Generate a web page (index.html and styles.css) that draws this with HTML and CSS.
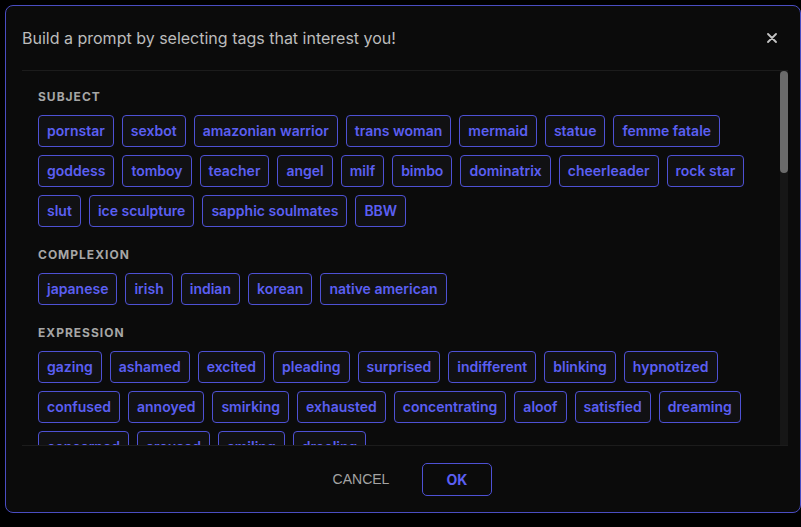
FILE: index.html
```html
<!DOCTYPE html>
<html>
    <head>
        <meta charset="UTF-8">
        <meta name="viewport" content="width=device-width, initial-scale=1.0">
        <title>Prompt Builder</title>
        <link rel="stylesheet" href="styles.css">
    </head>
    <body>
        <div class="dialog">
            <div class="dialog-header">
                <h2 class="dialog-title">Build a prompt by selecting tags that interest you!</h2>
                <button class="close-btn" aria-label="Close">
                    <svg width="10" height="10" viewBox="0 0 10 10">
                        <path d="M1 1 L9 9 M9 1 L1 9" stroke="#c4c4c4" stroke-width="1.8" stroke-linecap="round"/>
                    </svg>
                </button>
            </div>

            <div class="content-wrap">
                <div class="dialog-content">
                    <div class="section">
                        <h3 class="section-title">SUBJECT</h3>
                        <div class="tags">
                            <span class="tag">pornstar</span>
                            <span class="tag">sexbot</span>
                            <span class="tag">amazonian warrior</span>
                            <span class="tag">trans woman</span>
                            <span class="tag">mermaid</span>
                            <span class="tag">statue</span>
                            <span class="tag">femme fatale</span>
                            <span class="tag">goddess</span>
                            <span class="tag">tomboy</span>
                            <span class="tag">teacher</span>
                            <span class="tag">angel</span>
                            <span class="tag">milf</span>
                            <span class="tag">bimbo</span>
                            <span class="tag">dominatrix</span>
                            <span class="tag">cheerleader</span>
                            <span class="tag">rock star</span>
                            <span class="tag">slut</span>
                            <span class="tag">ice sculpture</span>
                            <span class="tag">sapphic soulmates</span>
                            <span class="tag">BBW</span>
                        </div>
                    </div>

                    <div class="section">
                        <h3 class="section-title">COMPLEXION</h3>
                        <div class="tags">
                            <span class="tag">japanese</span>
                            <span class="tag">irish</span>
                            <span class="tag">indian</span>
                            <span class="tag">korean</span>
                            <span class="tag">native american</span>
                        </div>
                    </div>

                    <div class="section">
                        <h3 class="section-title">EXPRESSION</h3>
                        <div class="tags">
                            <span class="tag">gazing</span>
                            <span class="tag">ashamed</span>
                            <span class="tag">excited</span>
                            <span class="tag">pleading</span>
                            <span class="tag">surprised</span>
                            <span class="tag">indifferent</span>
                            <span class="tag">blinking</span>
                            <span class="tag">hypnotized</span>
                            <span class="tag">confused</span>
                            <span class="tag">annoyed</span>
                            <span class="tag">smirking</span>
                            <span class="tag">exhausted</span>
                            <span class="tag">concentrating</span>
                            <span class="tag">aloof</span>
                            <span class="tag">satisfied</span>
                            <span class="tag">dreaming</span>
                            <span class="tag">concerned</span>
                            <span class="tag">aroused</span>
                            <span class="tag">smiling</span>
                            <span class="tag">drooling</span>
                        </div>
                    </div>

                    <div class="section">
                        <h3 class="section-title">HAIR</h3>
                        <div class="tags">
                            <span class="tag">blonde</span>
                            <span class="tag">brunette</span>
                            <span class="tag">redhead</span>
                            <span class="tag">black hair</span>
                            <span class="tag">pink hair</span>
                            <span class="tag">ponytail</span>
                            <span class="tag">pigtails</span>
                            <span class="tag">braids</span>
                            <span class="tag">bob cut</span>
                            <span class="tag">long hair</span>
                            <span class="tag">short hair</span>
                            <span class="tag">curly hair</span>
                        </div>
                    </div>

                    <div class="section">
                        <h3 class="section-title">STYLE</h3>
                        <div class="tags">
                            <span class="tag">photorealistic</span>
                            <span class="tag">anime</span>
                            <span class="tag">oil painting</span>
                            <span class="tag">watercolor</span>
                            <span class="tag">digital art</span>
                            <span class="tag">cyberpunk</span>
                            <span class="tag">fantasy</span>
                            <span class="tag">vintage</span>
                            <span class="tag">cinematic</span>
                        </div>
                    </div>
                </div>

                <div class="scrollbar">
                    <div class="scroll-thumb"></div>
                </div>
            </div>

            <div class="dialog-footer">
                <button class="btn-cancel">CANCEL</button>
                <button class="btn-ok">OK</button>
            </div>
        </div>
    </body>
</html>
```

FILE: styles.css
```css
*{
    margin: 0;
    padding: 0;
    box-sizing: border-box;
}
body{
    background-color: #000;
    font-family: Inter, "Noto Sans", sans-serif;
    overflow: hidden;
}
.dialog{
    margin: 5px 0 0 5px;
    width: 796px;
    height: 508px;
    background-color: #0b0b0b;
    border: 1px solid #4a4dc2;
    border-radius: 8px;
    display: flex;
    flex-direction: column;
}
.dialog-header{
    height: 64px;
    flex-shrink: 0;
    display: flex;
    align-items: center;
    justify-content: space-between;
    padding: 0 23px 0 16px;
}
.dialog-title{
    font-size: 16px;
    font-weight: 400;
    color: #bcbcbc;
}
.close-btn{
    background: none;
    border: none;
    display: flex;
    cursor: pointer;
}
.content-wrap{
    flex: 1;
    min-height: 0;
    display: flex;
    margin: 0 12px 0 16px;
    border-top: 1px solid #1c1c1c;
    border-bottom: 1px solid #1c1c1c;
}
.dialog-content{
    flex: 1;
    overflow: hidden;
    padding: 17px 16px 0 16px;
}
.scrollbar{
    width: 8px;
    flex-shrink: 0;
    background-color: #161616;
}
.scroll-thumb{
    height: 102px;
    background-color: #6b6b6b;
    border-radius: 4px;
}
.section{
    margin-bottom: 19px;
}
.section-title{
    font-size: 12px;
    line-height: 18px;
    font-weight: 700;
    letter-spacing: 1px;
    color: #a6a6a6;
    margin-bottom: 9px;
}
.tags{
    display: flex;
    flex-wrap: wrap;
    gap: 8px;
}
.tag{
    display: inline-block;
    height: 32px;
    padding: 5px 8px;
    font-size: 14px;
    line-height: 20px;
    font-weight: 600;
    color: #5b5ff2;
    background-color: #111113;
    border: 1px solid #4e51d4;
    border-radius: 4px;
    cursor: pointer;
}
.dialog-footer{
    height: 66px;
    flex-shrink: 0;
    display: flex;
    align-items: center;
    justify-content: center;
    gap: 26px;
    padding-left: 12px;
}
.btn-cancel{
    width: 70px;
    height: 33px;
    background: none;
    border: none;
    font-family: "Liberation Sans", Arial, sans-serif;
    font-size: 14px;
    color: #a3a3a3;
    cursor: pointer;
}
.btn-ok{
    width: 70px;
    height: 33px;
    background: none;
    border: 1px solid #4e51d4;
    border-radius: 5px;
    font-family: Inter, sans-serif;
    font-size: 14px;
    font-weight: 700;
    color: #5b5ff2;
    cursor: pointer;
}
```
